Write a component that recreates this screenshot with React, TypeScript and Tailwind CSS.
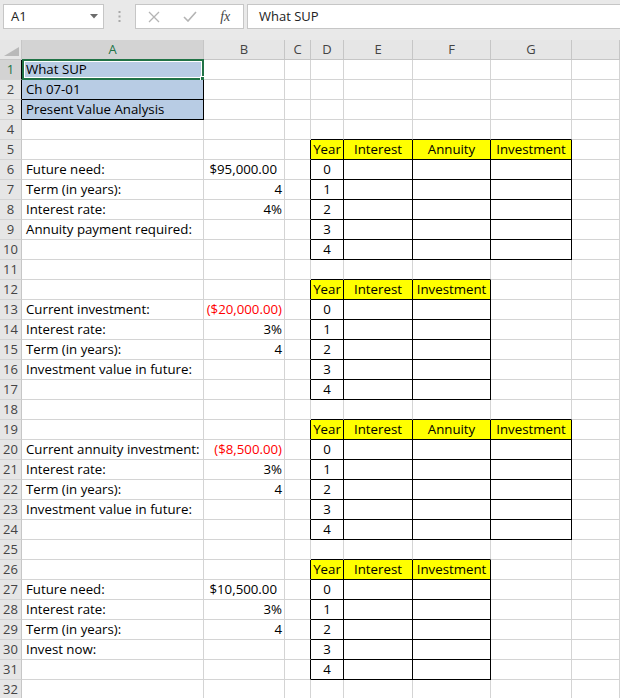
import React from "react";

const FONT = { fontFamily: '"Open Sans", "Liberation Sans", sans-serif' };

const COL_LETTERS = ["A", "B", "C", "D", "E", "F", "G", ""];
const ROW_COUNT = 32;

type Align = "l" | "r" | "c" | "cur";
type CellData = { t: string; a?: Align; red?: boolean };

type Range = { r0: number; r1: number; c0: number; c1: number };

// bordered tables (cols: A=0 ... G=6)
const TABLES: Range[] = [
  { r0: 5, r1: 10, c0: 3, c1: 6 },
  { r0: 12, r1: 17, c0: 3, c1: 5 },
  { r0: 19, r1: 24, c0: 3, c1: 6 },
  { r0: 26, r1: 31, c0: 3, c1: 5 },
];
const TITLE: Range = { r0: 1, r1: 3, c0: 0, c1: 0 };

const inRange = (g: Range, r: number, c: number) =>
  r >= g.r0 && r <= g.r1 && c >= g.c0 && c <= g.c1;
const boxed = (r: number, c: number) =>
  TABLES.some((g) => inRange(g, r, c)) || inRange(TITLE, r, c);
const isHeaderRow = (r: number, c: number) =>
  TABLES.some((g) => g.r0 === r && c >= g.c0 && c <= g.c1);

const cells: Record<string, CellData> = {};
const put = (r: number, c: number, t: string, a: Align = "l", red = false) => {
  cells[`${r},${c}`] = { t, a, red };
};

put(1, 0, "What SUP");
put(2, 0, "Ch 07-01");
put(3, 0, "Present Value Analysis");

put(6, 0, "Future need:");
put(6, 1, "$95,000.00", "cur");
put(7, 0, "Term (in years):");
put(7, 1, "4", "r");
put(8, 0, "Interest rate:");
put(8, 1, "4%", "r");
put(9, 0, "Annuity payment required:");

put(13, 0, "Current investment:");
put(13, 1, "($20,000.00)", "r", true);
put(14, 0, "Interest rate:");
put(14, 1, "3%", "r");
put(15, 0, "Term (in years):");
put(15, 1, "4", "r");
put(16, 0, "Investment value in future:");

put(20, 0, "Current annuity investment:");
put(20, 1, "($8,500.00)", "r", true);
put(21, 0, "Interest rate:");
put(21, 1, "3%", "r");
put(22, 0, "Term (in years):");
put(22, 1, "4", "r");
put(23, 0, "Investment value in future:");

put(27, 0, "Future need:");
put(27, 1, "$10,500.00", "cur");
put(28, 0, "Interest rate:");
put(28, 1, "3%", "r");
put(29, 0, "Term (in years):");
put(29, 1, "4", "r");
put(30, 0, "Invest now:");

TABLES.forEach((g) => {
  const heads =
    g.c1 === 6 ? ["Year", "Interest", "Annuity", "Investment"] : ["Year", "Interest", "Investment"];
  heads.forEach((h, i) => put(g.r0, g.c0 + i, h, "c"));
  for (let y = 0; y < 5; y++) put(g.r0 + 1 + y, 3, String(y), "c");
});

function FormulaBar() {
  return (
    <div className="h-[40px] bg-[#e9e9e9] flex items-start pt-[4px] pl-[3px]">
      <div className="w-[101px] h-[25px] bg-white border border-[#c6c6c6] flex items-center justify-between pl-[7px] pr-[5px] text-[13px] text-[#222]">
        <span>A1</span>
        <svg width="8" height="5" viewBox="0 0 8 5">
          <path d="M0 0 H8 L4 4.5 Z" fill="#6b6b6b" />
        </svg>
      </div>
      <div className="w-[31px] h-[25px] flex items-center justify-center">
        <svg width="3" height="11" viewBox="0 0 3 11">
          <rect x="0.5" y="0" width="2" height="2" fill="#a8a8a8" />
          <rect x="0.5" y="4.5" width="2" height="2" fill="#a8a8a8" />
          <rect x="0.5" y="9" width="2" height="2" fill="#a8a8a8" />
        </svg>
      </div>
      <div className="w-[109px] h-[25px] bg-white border border-[#c6c6c6] flex items-center">
        <div className="w-[36px] flex justify-center">
          <svg width="12" height="12" viewBox="0 0 12 12">
            <path d="M1 1 L11 11 M11 1 L1 11" stroke="#b4b4b4" strokeWidth="1.3" />
          </svg>
        </div>
        <div className="w-[36px] flex justify-center">
          <svg width="14" height="11" viewBox="0 0 14 11">
            <path d="M1 6 L5 10 L13 1" stroke="#b4b4b4" strokeWidth="1.6" fill="none" />
          </svg>
        </div>
        <div className="w-[36px] flex justify-center">
          <span
            className="italic text-[14px] text-[#444] leading-none"
            style={{ fontFamily: '"Liberation Serif", serif' }}
          >
            fx
          </span>
        </div>
      </div>
      <div className="ml-[3px] flex-1 h-[25px] bg-white border border-r-0 border-[#c6c6c6] flex items-center pl-[11px] text-[13px] text-[#222]">
        What SUP
      </div>
    </div>
  );
}

function Cell({ r, c }: { r: number; c: number }) {
  const d = cells[`${r},${c}`];
  const rightBlack = boxed(r, c) || boxed(r, c + 1);
  const bottomBlack = boxed(r, c) || boxed(r + 1, c);
  const fill = isHeaderRow(r, c)
    ? "bg-[#ffff00]"
    : inRange(TITLE, r, c)
      ? "bg-[#b8cce4]"
      : "bg-white";
  const align =
    d?.a === "r"
      ? "justify-end pr-[2px]"
      : d?.a === "cur"
        ? "justify-end pr-[7px]"
        : d?.a === "c"
          ? "justify-center"
          : "justify-start pl-[4px]";
  return (
    <div
      className={`relative h-[20px] border-r border-b flex ${align} ${fill} ${
        rightBlack ? "border-r-black" : "border-r-[#d4d4d4]"
      } ${bottomBlack ? "border-b-black" : "border-b-[#d4d4d4]"}`}
    >
      {d && (
        <span
          className={`whitespace-nowrap leading-[19px] text-[13.25px] ${
            d.red ? "text-[#ff0000]" : "text-black"
          }`}
        >
          {d.t}
        </span>
      )}
      {r === 1 && c === 0 && (
        <>
          <div className="absolute left-0 top-[-1px] right-[-1px] bottom-[-1px] border-2 border-[#217346] shadow-[inset_0_0_0_1px_white]" />
          <div className="absolute right-[-4px] bottom-[-4px] w-[7px] h-[7px] bg-[#217346] border border-white" />
        </>
      )}
    </div>
  );
}

export default function App() {
  const rows = Array.from({ length: ROW_COUNT }, (_, i) => i + 1);
  return (
    <div className="w-[620px] h-[698px] overflow-hidden bg-white" style={FONT}>
      <FormulaBar />
      <div className="grid grid-cols-[22px_182px_81px_26px_33px_69px_78px_81px_1fr]">
        {/* corner */}
        <div className="h-[20px] bg-[#e6e6e6] border-r border-b border-[#c6c6c6] flex items-end justify-end pr-[2px] pb-[3px]">
          <svg width="15" height="9" viewBox="0 0 15 9">
            <path d="M15 0 V9 H0 Z" fill="#b9b9b9" />
          </svg>
        </div>
        {COL_LETTERS.map((l, i) => (
          <div
            key={`h${i}`}
            className={`h-[20px] border-r border-b border-[#c6c6c6] flex items-center justify-center text-[13px] ${
              i === 0 ? "bg-[#d3d3d3] text-[#217346]" : "bg-[#e6e6e6] text-[#444]"
            }`}
          >
            {l}
          </div>
        ))}
        {rows.map((r) => (
          <React.Fragment key={r}>
            <div
              className={`h-[20px] border-r border-b border-b-[#d4d4d4] flex items-center justify-center text-[13px] ${
                r === 1 ? "bg-[#d3d3d3] text-[#217346]" : "bg-[#e6e6e6] text-[#444]"
              } ${inRange(TITLE, r, 0) ? "border-r-black" : "border-r-[#c6c6c6]"}`}
            >
              {r}
            </div>
            {COL_LETTERS.map((_, c) => (
              <Cell key={c} r={r} c={c} />
            ))}
          </React.Fragment>
        ))}
      </div>
    </div>
  );
}
